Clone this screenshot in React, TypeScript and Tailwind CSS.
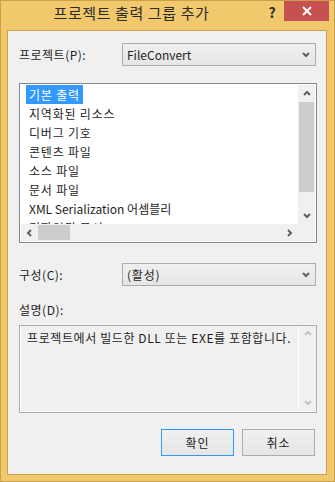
import React from "react";

const font = { fontFamily: '"Noto Sans CJK KR", "Noto Sans", sans-serif' };

const Chevron = ({ dir, color = "#606060" }: { dir: "up" | "down" | "left" | "right"; color?: string }) => {
  const paths: Record<string, string> = {
    down: "M1 2 L4 5 L7 2",
    up: "M1 5 L4 2 L7 5",
    left: "M5 1 L2 4 L5 7",
    right: "M2 1 L5 4 L2 7",
  };
  return (
    <svg width="8" height="8" viewBox="0 0 8 8">
      <path d={paths[dir]} fill="none" stroke={color} strokeWidth="2" />
    </svg>
  );
};

const Combo = ({ value, ko }: { value: string; ko?: boolean }) => (
  <div className="flex h-[23px] w-[194px] items-center justify-between border border-[#acacac] bg-gradient-to-b from-[#f0f0f0] to-[#e5e5e5] pl-[4px] pr-[5px] text-[12px] text-[#1e1e1e]">
    <span className={ko ? "tracking-[0.8px]" : ""}>{value}</span>
    <Chevron dir="down" />
  </div>
);

const items = [
  "기본 출력",
  "지역화된 리소스",
  "디버그 기호",
  "콘텐츠 파일",
  "소스 파일",
  "문서 파일",
  "XML Serialization 어셈블리",
  "컴파일된 문서",
];

export default function App() {
  return (
    <div
      className="flex h-[482px] w-[335px] flex-col border border-[#c9a14b] bg-[#f1c96c]"
      style={font}
    >
      {/* title bar */}
      <div className="flex h-[29px] shrink-0">
        <div className="flex flex-1 items-center justify-center pb-[5px] text-[15px] tracking-[0.6px] text-[#2b2b2b]">
          프로젝트 출력 그룹 추가
        </div>
        <div className="flex w-[20px] items-start justify-center pt-[1px] text-[14px] font-bold text-[#2b2b2b]">
          ?
        </div>
        <div className="ml-[2px] flex h-[20px] w-[45px] items-center justify-center bg-[#c75050] mr-[5px]">
          <svg width="10" height="10" viewBox="0 0 10 10">
            <path d="M1 1 L9 9 M9 1 L1 9" stroke="#fff" strokeWidth="2" />
          </svg>
        </div>
      </div>

      {/* panel */}
      <div className="ml-[6px] mr-[7px] flex h-[445px] flex-col border border-[#c9a14b] bg-[#f0f0f0] pl-[11px] pr-[10px] text-[12px] text-[#1e1e1e]">
        <div className="mt-[12px] flex items-center">
          <span className="w-[103px] tracking-[0.5px]">프로젝트(P):</span>
          <Combo value="FileConvert" />
        </div>

        {/* list box */}
        <div className="mt-[17px] flex h-[160px] w-[298px] flex-col border border-[#828790] bg-white p-px">
          <div className="flex min-h-0 flex-1">
            <div className="flex-1 overflow-hidden pl-[5px]">
              {items.map((it, i) => (
                <div key={it} className="flex h-[19px] items-center whitespace-nowrap">
                  <span
                    className={
                      i === 0
                        ? "bg-[#3399ff] px-[3px] leading-[19px] tracking-[0.8px] text-white"
                        : i === 6
                          ? "px-[3px] leading-[19px]"
                          : "px-[3px] leading-[19px] tracking-[0.8px]"
                    }
                  >
                    {it}
                  </span>
                </div>
              ))}
            </div>
            <div className="flex w-[17px] flex-col bg-[#f0f0f0]">
              <div className="flex h-[17px] items-center justify-center">
                <Chevron dir="up" />
              </div>
              <div className="mx-[1px] h-[90px] bg-[#cdcdcd]" />
              <div className="flex-1" />
              <div className="flex h-[17px] items-center justify-center">
                <Chevron dir="down" />
              </div>
            </div>
          </div>
          <div className="flex h-[17px]">
            <div className="flex flex-1 items-center bg-[#f0f0f0]">
              <div className="flex w-[17px] items-center justify-center">
                <Chevron dir="left" />
              </div>
              <div className="h-[15px] w-[32px] bg-[#cdcdcd]" />
              <div className="flex-1" />
              <div className="flex w-[17px] items-center justify-center">
                <Chevron dir="right" />
              </div>
            </div>
            <div className="w-[17px] bg-[#f0f0f0]" />
          </div>
        </div>

        <div className="mt-[20px] flex items-center">
          <span className="w-[103px] tracking-[0.5px]">구성(C):</span>
          <Combo value="(활성)" ko />
        </div>

        <div className="mt-[15px] leading-[18px] tracking-[0.5px]">설명(D):</div>

        {/* description */}
        <div className="mt-[6px] flex h-[88px] w-[298px] border border-[#acacac]">
          <div className="flex flex-1 border-b border-l border-white">
            <div className="flex-1 whitespace-nowrap pl-[6px] pt-[3px] leading-[18px] tracking-[0.6px]">
              프로젝트에서 빌드한 DLL 또는 EXE를 포함합니다.
            </div>
            <div className="flex w-[18px] flex-col justify-between border-l border-white py-[4px]">
              <div className="flex justify-center">
                <Chevron dir="up" color="#c2c2c2" />
              </div>
              <div className="flex justify-center">
                <Chevron dir="down" color="#c2c2c2" />
              </div>
            </div>
          </div>
        </div>

        {/* buttons */}
        <div className="mt-[16px] flex justify-end gap-[8px] pr-[1px]">
          <button className="flex h-[27px] w-[73px] items-center justify-center border border-[#3399ff] bg-gradient-to-b from-[#f0f0f0] to-[#e5e5e5] text-[12px] tracking-[1px]">
            확인
          </button>
          <button className="flex h-[27px] w-[73px] items-center justify-center border border-[#acacac] bg-gradient-to-b from-[#f0f0f0] to-[#e5e5e5] text-[12px] tracking-[1px]">
            취소
          </button>
        </div>
      </div>
    </div>
  );
}
